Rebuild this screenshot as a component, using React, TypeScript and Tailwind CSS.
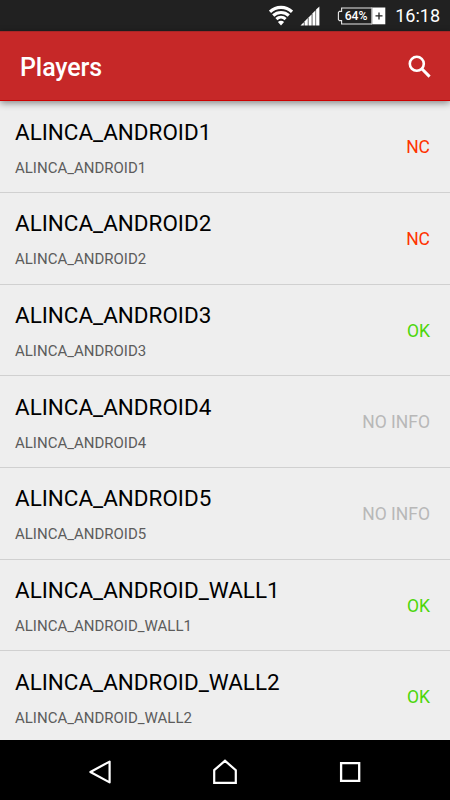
interface Player {
  name: string
  status: "NC" | "OK" | "NO INFO"
}

const players: Player[] = [
  { name: "ALINCA_ANDROID1", status: "NC" },
  { name: "ALINCA_ANDROID2", status: "NC" },
  { name: "ALINCA_ANDROID3", status: "OK" },
  { name: "ALINCA_ANDROID4", status: "NO INFO" },
  { name: "ALINCA_ANDROID5", status: "NO INFO" },
  { name: "ALINCA_ANDROID_WALL1", status: "OK" },
  { name: "ALINCA_ANDROID_WALL2", status: "OK" },
]

const statusColors = {
  NC: "text-[#ff3300]",
  OK: "text-[#4cd60a]",
  "NO INFO": "text-[#b8b8b8]",
}

function StatusBar() {
  return (
    <div className="flex h-[31px] shrink-0 items-center justify-end bg-[#212121] pr-[10px] text-white">
      <svg width="24" height="21" viewBox="0 0 24 21" fill="none" stroke="white" strokeWidth="3.1">
        <path d="M1 6.8C7.2 0.9 16.8 0.9 23 6.8" />
        <path d="M4.2 10.5C8.6 6.4 15.4 6.4 19.8 10.5" />
        <path d="M7.4 14.1C10 11.7 14 11.7 16.6 14.1" />
        <path d="M8.9 17C10.7 15.4 13.3 15.4 15.1 17L12 20.6Z" fill="white" stroke="none" />
      </svg>
      <svg className="ml-[7px]" width="20" height="20" viewBox="0 0 20 20" fill="white">
        <path d="M0.5 19.5L3.8 16.2V19.5Z" />
        <path d="M4.5 15.4L7.8 12.1V19.5H4.5Z" />
        <path d="M8.5 11.4L11.7 8.2V19.5H8.5Z" />
        <path d="M12.4 7.4L15.5 4.3V19.5H12.4Z" />
        <path d="M16.1 3.6L19.4 0.4V19.5H16.1Z" />
      </svg>
      <div className="relative ml-[17px] h-[18px] w-[49px]">
        <svg className="absolute inset-0" width="49" height="18" viewBox="0 0 49 18" fill="none">
          <path d="M35 1H4.6V4.4H2.4L1.4 5.4V12.6L2.4 13.6H4.6V17H35" stroke="#e8e8e8" strokeWidth="1.1" />
          <path d="M34.5 0.5H48.3V17.3H34.5Z" fill="white" />
          <path d="M35 1V17" stroke="#a8a8a8" />
          <path d="M42 5.4V12.4M38.5 8.9H45.5" stroke="#212121" strokeWidth="1.3" />
        </svg>
        <span className="absolute left-[7.5px] top-0 text-[12.2px] font-medium leading-[18px]">64%</span>
      </div>
      <span className="ml-[9px] pt-px text-[18px] leading-[30px]">16:18</span>
    </div>
  )
}

function AppBar() {
  return (
    <header className="relative z-10 flex h-[70px] shrink-0 items-center justify-between border-t border-b border-t-[#a82626] border-b-[#cc0000] bg-[#c62828] pr-[19px] pl-5 shadow-[0_2px_7px_rgba(0,0,0,0.45)]">
      <h1 className="pt-[3px] text-[25px] font-medium leading-[30px] tracking-[-0.1px] text-white">Players</h1>
      <svg width="23" height="23" viewBox="0 0 23 23" fill="none" stroke="white">
        <circle cx="8.8" cy="8.8" r="7" strokeWidth="2.6" />
        <path d="M13.8 13.8L21.6 21.6" strokeWidth="3" />
      </svg>
    </header>
  )
}

function PlayerRow({ player }: { player: Player }) {
  return (
    <li className="flex h-[91.67px] shrink-0 items-center justify-between border-b border-[#d0d0d0] pt-px pr-5 pl-[15px]">
      <div className="pt-[2px]">
        <div className="text-[22.45px] leading-[27px] text-black">{player.name}</div>
        <div className="mt-[12px] text-[15px] leading-[20px] text-[#5c5c5c]">{player.name}</div>
      </div>
      <span className={`text-[17.5px] leading-[22px] ${statusColors[player.status]}`}>{player.status}</span>
    </li>
  )
}

function NavBar() {
  return (
    <nav className="flex h-[60px] shrink-0 items-center justify-between bg-black pt-1 pr-[89px] pl-[88px]">
      <svg width="24" height="26" viewBox="0 0 24 26" fill="none" stroke="white" strokeWidth="2.2" strokeLinejoin="round">
        <path d="M21.6 2.6V23.4L2.4 13Z" />
      </svg>
      <svg width="26" height="26" viewBox="0 0 26 26" fill="none" stroke="white" strokeWidth="2.2">
        <path d="M2.2 11.2L13 1.8L23.8 11.2V23.8H2.2Z" />
      </svg>
      <svg width="23" height="22" viewBox="0 0 23 22" fill="none" stroke="white" strokeWidth="2.3">
        <path d="M3.1 2.1H21.2V19.9H3.1Z" />
      </svg>
    </nav>
  )
}

export default function App() {
  return (
    <div className="flex h-[800px] w-[450px] flex-col overflow-hidden bg-[#eeeeee] font-['Roboto',sans-serif]">
      <StatusBar />
      <AppBar />
      <ul className="flex min-h-0 flex-1 flex-col overflow-hidden pt-[0.4px]">
        {players.map((player) => (
          <PlayerRow key={player.name} player={player} />
        ))}
      </ul>
      <NavBar />
    </div>
  )
}
